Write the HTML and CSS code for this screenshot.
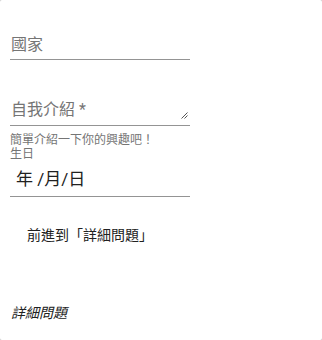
FILE: index.html
```html
<!DOCTYPE html>
<html lang="zh-Hant">
<head>
<meta charset="utf-8">
<link rel="stylesheet" href="styles.css">
</head>
<body>
<div class="card">
  <div class="form">
    <div class="field field-country">
      <div class="control"><span class="placeholder">國家</span></div>
    </div>
    <div class="field field-intro">
      <div class="control control-area">
        <span class="placeholder">自我介紹 *</span>
        <svg class="resize" width="7" height="7" viewBox="0 0 7 7"><path d="M6.5 0.5L0.5 6.5M6.5 3.5L3.5 6.5" stroke="#555" stroke-width="1" fill="none"/></svg>
      </div>
      <div class="helper">簡單介紹一下你的興趣吧！</div>
    </div>
    <div class="field field-date">
      <div class="label">生日</div>
      <div class="control control-date"><span class="date-text">年 /月/日</span></div>
    </div>
    <div class="actions">
      <button class="btn" type="button">前進到「詳細問題」</button>
    </div>
  </div>
  <div class="section-title">詳細問題</div>
</div>
</body>
</html>
```

FILE: styles.css
```css
html, body {
  margin: 0;
  padding: 0;
}
body {
  background: #c8c8c8;
  font-family: Roboto, "Noto Sans CJK TC", sans-serif;
}
.card {
  background: #ffffff;
  height: 340px;
  border-radius: 2px;
  padding: 0 10px;
  box-sizing: border-box;
  overflow: hidden;
  display: flex;
  flex-direction: column;
}
.form {
  width: 180px;
  display: flex;
  flex-direction: column;
}
.control {
  display: flex;
  align-items: flex-end;
  border-bottom: 1px solid #949494;
  box-sizing: border-box;
}
.placeholder {
  font-size: 16px;
  line-height: 20px;
  color: #757575;
  padding-left: 1px;
}
.field-country {
  margin-top: 35px;
}
.field-country .control {
  height: 25px;
  padding-bottom: 4px;
}
.field-intro {
  margin-top: 40px;
}
.control-area {
  height: 26px;
  padding-bottom: 5px;
  position: relative;
}
.resize {
  position: absolute;
  right: 2px;
  bottom: 6px;
}
.helper {
  font-size: 12px;
  line-height: 14px;
  color: #757575;
  margin-top: 7px;
}
.label {
  font-size: 12px;
  line-height: 14px;
  color: #757575;
}
.control-date {
  height: 36px;
  padding-left: 6px;
  align-items: center;
}
.date-text {
  font-size: 17px;
  color: #212121;
  padding-bottom: 2px;
}
.actions {
  margin-top: 19px;
}
.btn {
  font-family: Roboto, "Noto Sans CJK TC", sans-serif;
  font-size: 14px;
  color: #212121;
  background: transparent;
  border: none;
  height: 36px;
  padding: 0 16px 0 17px;
  margin: 0;
}
.section-title {
  margin-top: 50px;
  font-size: 14px;
  font-style: italic;
  color: #212121;
  padding-left: 1px;
}
```
